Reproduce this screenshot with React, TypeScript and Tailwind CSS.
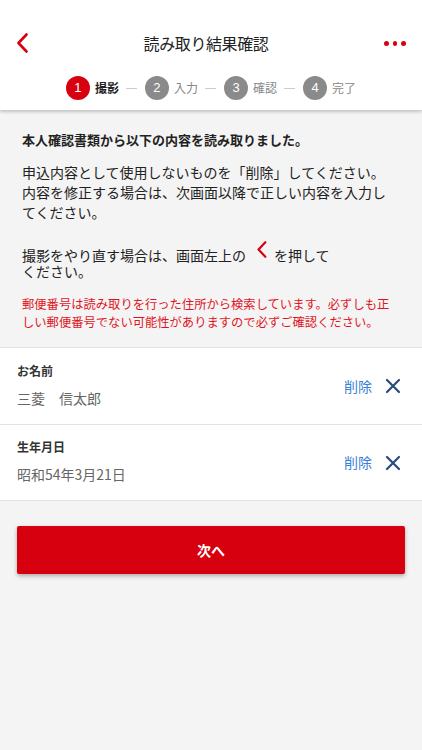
const steps = [
  { n: 1, label: "撮影", active: true },
  { n: 2, label: "入力", active: false },
  { n: 3, label: "確認", active: false },
  { n: 4, label: "完了", active: false },
];

const rows = [
  { label: "お名前", value: "三菱　信太郎" },
  { label: "生年月日", value: "昭和54年3月21日" },
];

const Chevron = ({ className }: { className?: string }) => (
  <svg viewBox="0 0 12 20" className={className} fill="none">
    <path d="M10.5 1.5 L2.5 10 L10.5 18.5" stroke="#d7000f" strokeWidth="2.6" strokeLinecap="round" strokeLinejoin="round" />
  </svg>
);

const App = () => {
  return (
    <div className="w-[422px] h-[750px] bg-[#f4f4f4] font-['Noto_Sans_CJK_JP','Noto_Sans',sans-serif] overflow-hidden">
      <header className="bg-white h-[110px] shadow-[0_2px_3px_rgba(0,0,0,0.2)] relative z-10">
        <div className="h-[86px] flex items-center justify-between px-4">
          <Chevron className="w-3 h-5" />
          <h1 className="text-[16px] text-[#222] tracking-tight">読み取り結果確認</h1>
          <div className="flex gap-[4px] w-[22px]">
            <span className="w-[5px] h-[5px] rounded-full bg-[#d7000f]" />
            <span className="w-[5px] h-[5px] rounded-full bg-[#d7000f]" />
            <span className="w-[5px] h-[5px] rounded-full bg-[#d7000f]" />
          </div>
        </div>
        <div className="flex items-center justify-center -mt-[10px]">
          {steps.map((s, i) => (
            <div key={s.n} className="flex items-center">
              <span
                className={`w-6 h-6 rounded-full flex items-center justify-center text-white text-[13px] font-['Liberation_Sans',sans-serif] ${
                  s.active ? "bg-[#d7000f]" : "bg-[#8a8a8a]"
                }`}
              >
                {s.n}
              </span>
              <span
                className={`ml-[5px] text-[12px] ${
                  s.active ? "font-bold text-[#222]" : "text-[#888]"
                }`}
              >
                {s.label}
              </span>
              {i < steps.length - 1 && (
                <span className="w-[11px] h-px bg-[#ccc] ml-[7px] mr-[8px]" />
              )}
            </div>
          ))}
        </div>
      </header>

      <section className="pl-[22px] pr-[28px] pt-[20px] pb-[16px] text-[#222]">
        <p className="text-[13px] font-bold leading-[20px]">
          本人確認書類から以下の内容を読み取りました。
        </p>
        <p className="text-[14px] leading-[20px] mt-[12px]">
          申込内容として使用しないものを「削除」してください。内容を修正する場合は、次画面以降で正しい内容を入力してください。
        </p>
        <div className="text-[14px] mt-[20px]">
          <div className="flex items-end h-[22px]">
            <span className="leading-[18px]">撮影をやり直す場合は、画面左上の</span>
            <Chevron className="w-[11px] h-[17px] ml-[10px] mr-[7px] mb-[6px]" />
            <span className="leading-[18px]">を押して</span>
          </div>
          <div className="leading-[15px]">ください。</div>
        </div>
        <p className="text-[12.3px] leading-[18px] text-[#e0141e] mt-[16px]">
          郵便番号は読み取りを行った住所から検索しています。必ずしも正しい郵便番号でない可能性がありますので必ずご確認ください。
        </p>
      </section>

      <div className="bg-white border-y border-[#e2e2e2]">
        {rows.map((r, i) => (
          <div
            key={r.label}
            className={`h-[76px] flex items-center justify-between pl-[17px] pr-[21px] ${
              i > 0 ? "border-t border-[#e2e2e2]" : ""
            }`}
          >
            <div className="flex flex-col">
              <span className="text-[12px] font-bold text-[#333] leading-[16px] -mt-[3px]">{r.label}</span>
              <span className="text-[14px] text-[#666] leading-[18px] mt-[10px]">{r.value}</span>
            </div>
            <div className="flex items-center">
              <span className="text-[14px] text-[#3d7fd6]">削除</span>
              <svg viewBox="0 0 16 16" className="w-4 h-4 ml-[13px]" fill="none">
                <path d="M2 2 L14 14 M14 2 L2 14" stroke="#2b4b7e" strokeWidth="2.2" strokeLinecap="round" />
              </svg>
            </div>
          </div>
        ))}
      </div>

      <div className="px-[17px] pt-[25px]">
        <button className="w-full h-[48px] bg-[#d7000f] text-white text-[14px] font-bold rounded-[2px] shadow-[0_2px_4px_rgba(0,0,0,0.3)]">
          次へ
        </button>
      </div>
    </div>
  );
};

export default App;
